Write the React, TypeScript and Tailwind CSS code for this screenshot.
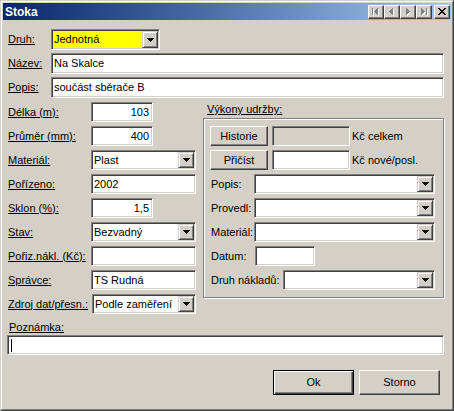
import React from "react";

const FONT = "font-['Liberation_Sans',Arial,sans-serif] text-[11px] leading-[13px] text-black";

function Tri() {
  return (
    <svg width="7" height="4" shapeRendering="crispEdges" className="block">
      <rect x="0" y="0" width="7" height="1" fill="#000" />
      <rect x="1" y="1" width="5" height="1" fill="#000" />
      <rect x="2" y="2" width="3" height="1" fill="#000" />
      <rect x="3" y="3" width="1" height="1" fill="#000" />
    </svg>
  );
}

function DropBtn() {
  return (
    <div className="w-[16px] shrink-0 flex items-center justify-center bg-[#d4d0c8] border border-t-[#d4d0c8] border-l-[#d4d0c8] border-r-[#404040] border-b-[#404040] shadow-[inset_1px_1px_0_#fff,inset_-1px_-1px_0_#808080]">
      <Tri />
    </div>
  );
}

function Box({
  cls,
  children,
  select,
  right,
}: {
  cls: string;
  children?: React.ReactNode;
  select?: boolean;
  right?: boolean;
}) {
  return (
    <div
      className={`flex shrink-0 p-px border border-t-[#808080] border-l-[#808080] border-r-white border-b-white shadow-[inset_1px_1px_0_#404040,inset_-1px_-1px_0_#d4d0c8] ${cls}`}
    >
      <div
        className={`flex-1 min-w-0 flex items-center whitespace-nowrap overflow-hidden ${
          right ? "justify-end pr-[2px]" : "pl-px"
        }`}
      >
        {children}
      </div>
      {select && <DropBtn />}
    </div>
  );
}

function PushBtn({ cls, children }: { cls: string; children: React.ReactNode }) {
  return (
    <div
      className={`flex shrink-0 items-center justify-center bg-[#d4d0c8] border border-t-white border-l-white border-r-[#404040] border-b-[#404040] shadow-[inset_-1px_-1px_0_#808080] ${cls}`}
    >
      {children}
    </div>
  );
}

type R = [number, number, number, number];

function Glyph({ rects, fill, shadow }: { rects: R[]; fill: string; shadow?: boolean }) {
  return (
    <svg width="14" height="12" shapeRendering="crispEdges" className="block">
      {shadow &&
        rects.map((r, i) => (
          <rect key={"s" + i} x={r[0] + 1} y={r[1] + 1} width={r[2]} height={r[3]} fill="#fff" />
        ))}
      {rects.map((r, i) => (
        <rect key={i} x={r[0]} y={r[1]} width={r[2]} height={r[3]} fill={fill} />
      ))}
    </svg>
  );
}

function leftTri(tx: number, cy: number): R[] {
  const out: R[] = [];
  for (let i = 0; i < 4; i++) out.push([tx + i, cy - i, 1, 2 * i + 1]);
  return out;
}
function rightTri(bx: number, cy: number): R[] {
  const out: R[] = [];
  for (let i = 0; i < 4; i++) out.push([bx + i, cy - (3 - i), 1, 2 * (3 - i) + 1]);
  return out;
}

const X_RECTS: R[] = [
  [3, 2, 2, 1], [9, 2, 2, 1],
  [4, 3, 2, 1], [8, 3, 2, 1],
  [5, 4, 4, 1],
  [6, 5, 2, 1],
  [5, 6, 4, 1],
  [4, 7, 2, 1], [8, 7, 2, 1],
  [3, 8, 2, 1], [9, 8, 2, 1],
];

function CapBtn({ children }: { children: React.ReactNode }) {
  return (
    <div className="w-[16px] h-[14px] shrink-0 bg-[#d4d0c8] border border-t-white border-l-white border-r-[#404040] border-b-[#404040] shadow-[inset_-1px_-1px_0_#808080] flex items-start">
      {children}
    </div>
  );
}

function LRow({ label, lw, children }: { label: string; lw: string; children: React.ReactNode }) {
  return (
    <div className="flex items-center h-[20px]">
      <span className={`shrink-0 whitespace-nowrap underline ${lw}`}>{label}</span>
      {children}
    </div>
  );
}

function GRow({ label, lw, children }: { label: string; lw: string; children: React.ReactNode }) {
  return (
    <div className="flex items-center h-[20px]">
      <span className={`shrink-0 whitespace-nowrap pl-px ${lw}`}>{label}</span>
      {children}
    </div>
  );
}

export default function App() {
  return (
    <div className={`w-[454px] h-[411px] bg-[#d4d0c8] ${FONT}`}>
      <div className="w-full h-full border border-t-[#d4d0c8] border-l-[#d4d0c8] border-r-[#404040] border-b-[#404040]">
        <div className="w-full h-full border border-t-white border-l-white border-r-[#808080] border-b-[#808080] p-px flex flex-col">
          {/* Title bar */}
          <div className="h-[17px] shrink-0 flex items-start bg-gradient-to-r from-[#0a246a] to-[#a6caf0] pr-[1px]">
            <span className="ml-[2px] mt-[2px] text-white font-bold text-[12px] leading-[14px]">Stoka</span>
            <div className="flex-1" />
            <div className="flex mt-[2px]">
              <CapBtn>
                <Glyph fill="#808080" shadow rects={[[3, 2, 1, 7], ...leftTri(5, 5)]} />
              </CapBtn>
              <CapBtn>
                <Glyph fill="#808080" shadow rects={leftTri(4, 5)} />
              </CapBtn>
              <CapBtn>
                <Glyph fill="#808080" shadow rects={rightTri(5, 5)} />
              </CapBtn>
              <CapBtn>
                <Glyph fill="#808080" shadow rects={[...rightTri(4, 5), [9, 2, 1, 7]]} />
              </CapBtn>
              <div className="w-[2px]" />
              <CapBtn>
                <Glyph fill="#000" rects={X_RECTS} />
              </CapBtn>
            </div>
          </div>

          {/* Content */}
          <div className="flex flex-col pl-[5px] pr-[7px] pt-[9px]">
            <div className="flex items-center h-[21px]">
              <span className="w-[43px] shrink-0 underline">Druh:</span>
              <Box cls="w-[109px] h-[21px] bg-[#ffff00]" select>
                Jednotná
              </Box>
            </div>
            <div className="flex items-center h-[21px] mt-[3px]">
              <span className="w-[43px] shrink-0 underline">Název:</span>
              <Box cls="w-[393px] h-[21px] bg-white">Na Skalce</Box>
            </div>
            <div className="flex items-center h-[21px] mt-[3px]">
              <span className="w-[43px] shrink-0 underline">Popis:</span>
              <Box cls="w-[393px] h-[21px] bg-white">součást sběrače B</Box>
            </div>

            <div className="flex mt-[4px]">
              {/* Left column */}
              <div className="w-[188px] shrink-0 flex flex-col gap-[4px]">
                <LRow label="Délka (m):" lw="w-[83px]">
                  <Box cls="w-[62px] h-[20px] bg-white" right>103</Box>
                </LRow>
                <LRow label="Průměr (mm):" lw="w-[83px]">
                  <Box cls="w-[62px] h-[20px] bg-white" right>400</Box>
                </LRow>
                <LRow label="Materiál:" lw="w-[83px]">
                  <Box cls="w-[105px] h-[20px] bg-white" select>Plast</Box>
                </LRow>
                <LRow label="Pořízeno:" lw="w-[83px]">
                  <Box cls="w-[105px] h-[20px] bg-white">2002</Box>
                </LRow>
                <LRow label="Sklon (%):" lw="w-[83px]">
                  <Box cls="w-[62px] h-[20px] bg-white" right>1,5</Box>
                </LRow>
                <LRow label="Stav:" lw="w-[83px]">
                  <Box cls="w-[105px] h-[20px] bg-white" select>Bezvadný</Box>
                </LRow>
                <LRow label="Pořiz.nákl. (Kč):" lw="w-[83px]">
                  <Box cls="w-[105px] h-[20px] bg-white" />
                </LRow>
                <LRow label="Správce:" lw="w-[83px]">
                  <Box cls="w-[105px] h-[20px] bg-white">TS Rudná</Box>
                </LRow>
                <LRow label="Zdroj dat/přesn.:" lw="w-[84px]">
                  <Box cls="w-[104px] h-[20px] bg-white" select>Podle zaměření</Box>
                </LRow>
              </div>

              {/* Right column */}
              <div className="ml-[7px] w-[241px] shrink-0 flex flex-col">
                <div className="h-[16px] leading-[14px] pl-[4px] underline">Výkony udržby:</div>
                <div className="h-[180px] border border-[#808080] shadow-[inset_1px_1px_0_#fff,1px_1px_0_#fff] pt-[7px] pl-[6px] flex flex-col gap-[4px]">
                  <div className="flex items-center h-[20px]">
                    <PushBtn cls="w-[58px] h-[20px]">Historie</PushBtn>
                    <div className="ml-[4px]">
                      <Box cls="w-[78px] h-[20px] bg-[#d4d0c8]" />
                    </div>
                    <span className="ml-[2px] whitespace-nowrap">Kč celkem</span>
                  </div>
                  <div className="flex items-center h-[20px]">
                    <PushBtn cls="w-[58px] h-[20px]">Přičíst</PushBtn>
                    <div className="ml-[4px]">
                      <Box cls="w-[78px] h-[20px] bg-white" />
                    </div>
                    <span className="ml-[2px] whitespace-nowrap">Kč nové/posl.</span>
                  </div>
                  <GRow label="Popis:" lw="w-[44px]">
                    <Box cls="w-[181px] h-[20px] bg-white" select />
                  </GRow>
                  <GRow label="Provedl:" lw="w-[44px]">
                    <Box cls="w-[181px] h-[20px] bg-white" select />
                  </GRow>
                  <GRow label="Materiál:" lw="w-[44px]">
                    <Box cls="w-[181px] h-[20px] bg-white" select />
                  </GRow>
                  <GRow label="Datum:" lw="w-[45px]">
                    <Box cls="w-[60px] h-[20px] bg-white" />
                  </GRow>
                  <GRow label="Druh nákladů:" lw="w-[73px]">
                    <Box cls="w-[152px] h-[20px] bg-white" select />
                  </GRow>
                </div>
              </div>
            </div>

            <div className="h-[16px] mt-[5px] leading-[16px] underline pl-px">Poznámka:</div>
            <div className="-ml-px">
              <Box cls="w-[437px] h-[20px] bg-white">
                <div className="w-px h-[13px] bg-black ml-[1px]" />
              </Box>
            </div>

            <div className="flex justify-end mt-[15px] pr-[4px] gap-[5px]">
              <div className="w-[81px] h-[25px] flex items-center justify-center bg-[#d4d0c8] border border-black shadow-[inset_1px_1px_0_#fff,inset_-1px_-1px_0_#404040,inset_-2px_-2px_0_#808080]">
                Ok
              </div>
              <PushBtn cls="w-[81px] h-[25px]">Storno</PushBtn>
            </div>
          </div>
        </div>
      </div>
    </div>
  );
}
